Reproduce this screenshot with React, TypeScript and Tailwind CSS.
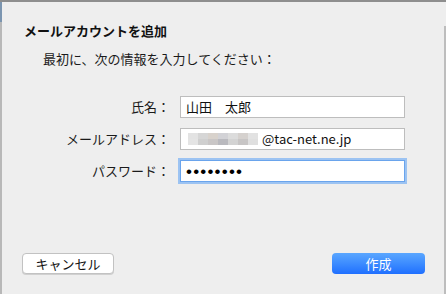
const jp = "font-['Helvetica_Neue','Noto_Sans_CJK_JP',sans-serif]";

function Field({ label, children, focused }: { label: string; children: React.ReactNode; focused?: boolean }) {
  return (
    <div className="flex items-center">
      <div className="w-[178px] pr-[10px] text-right text-[13px] text-[#1a1a1a]">{label}：</div>
      <div
        className={
          focused
            ? "flex h-[22px] w-[225px] items-center border border-[#6aa4ec] bg-white px-[5px] shadow-[0_0_0_2px_#9cc3f2]"
            : "flex h-[22px] w-[225px] items-center border border-[#bdbdbd] bg-white px-[5px]"
        }
      >
        {children}
      </div>
    </div>
  );
}

const blur = ["#e3e3e3", "#d6d6d6", "#d8d2cc", "#d2d2d6", "#dcdcdc", "#d5d1ce", "#e2e2e2"];
const blur2 = ["#e4e4e4", "#cfcfcf", "#c9c6c6", "#b9b9be", "#d3d3d3", "#c7c5c5", "#dfdfdf"];

export default function App() {
  return (
    <div className={`flex h-[294px] w-[446px] border-t-2 border-[#8e8e8e] bg-[#eeeeee] ${jp}`}>
      <div className="flex w-[2px] flex-col">
        <div className="h-[20px] bg-[#7b95b0]" />
        <div className="flex-1 bg-[#b8b8b8]" />
      </div>
      <div className="flex flex-1 flex-col">
        <div className="pl-[22px] pt-[19px] text-[13px] font-bold text-[#111]">メールアカウントを追加</div>
        <div className="pl-[41px] pt-[8px] text-[13px] text-[#1a1a1a]">最初に、次の情報を入力してください：</div>
        <div className="mt-[28px] flex flex-col gap-[10px]">
          <Field label="氏名">
            <span className="text-[13px] text-[#111]">山田　太郎</span>
          </Field>
          <Field label="メールアドレス">
            <div className="ml-[2px] flex flex-col">
              <div className="flex">
                {blur.map((c, i) => (
                  <div key={i} className="h-[6px] w-[10px]" style={{ background: c }} />
                ))}
              </div>
              <div className="flex">
                {blur2.map((c, i) => (
                  <div key={i} className="h-[6px] w-[10px]" style={{ background: c }} />
                ))}
              </div>
            </div>
            <span className="ml-[4px] text-[13px] text-[#111]">@tac-net.ne.jp</span>
          </Field>
          <Field label="パスワード" focused>
            <span className="font-['Liberation_Sans',sans-serif] text-[17px] leading-none tracking-[1.2px] text-black">
              ••••••••
            </span>
          </Field>
        </div>
        <div className="mt-auto mb-[20px] flex items-center justify-between pl-[20px] pr-[19px]">
          <button className="h-[21px] w-[92px] rounded-[4px] border border-[#c2c2c2] bg-white text-[13px] text-[#111] shadow-[0_1px_0_#d0d0d0]">
            キャンセル
          </button>
          <button className="h-[21px] w-[93px] rounded-[4px] bg-gradient-to-b from-[#5aa6ff] to-[#1f6fff] text-[13px] text-white">
            作成
          </button>
        </div>
      </div>
      <div className="flex w-[2px] flex-col">
        <div className="h-[24px]" />
        <div className="flex-1 bg-[#bdbdbd]" />
      </div>
    </div>
  );
}
